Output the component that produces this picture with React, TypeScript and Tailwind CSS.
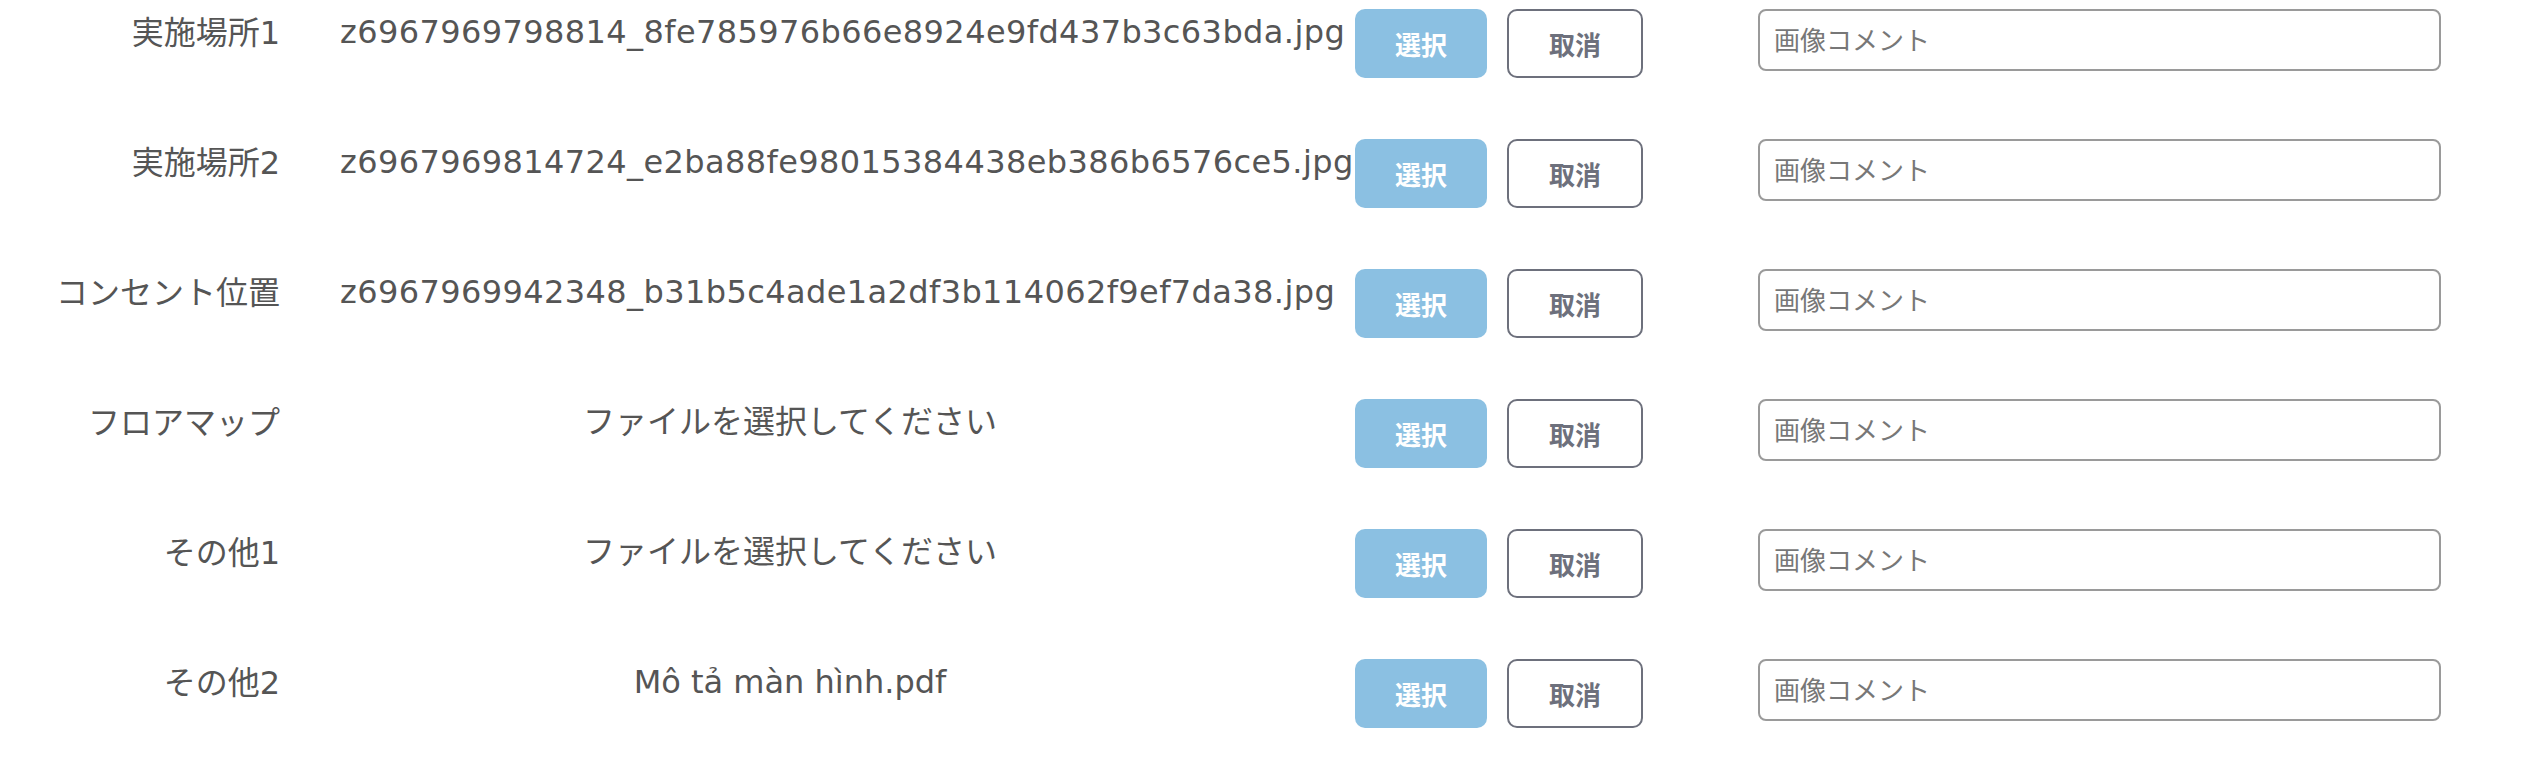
import React from 'react';

type Row = {
  label: string;
  file: string | null;
};

const rows: Row[] = [
  { label: '実施場所1', file: 'z6967969798814_8fe785976b66e8924e9fd437b3c63bda.jpg' },
  { label: '実施場所2', file: 'z6967969814724_e2ba88fe98015384438eb386b6576ce5.jpg' },
  { label: 'コンセント位置', file: 'z6967969942348_b31b5c4ade1a2df3b114062f9ef7da38.jpg' },
  { label: 'フロアマップ', file: null },
  { label: 'その他1', file: null },
  { label: 'その他2', file: 'Mô tả màn hình.pdf' },
];

const textFont = "font-['DejaVu_Sans','Noto_Sans_CJK_JP',sans-serif]";

function UploadRow({ row }: { row: Row }) {
  const tracking = row.file && row.file.length > 30 ? 'tracking-[0.4px]' : 'tracking-normal';

  return (
    <div className="flex items-start">
      {/* label */}
      <div className={`w-[280px] shrink-0 text-right text-[32px] leading-[48px] text-[#555555] ${textFont}`}>
        {row.label}
      </div>

      {/* file name */}
      <div
        className={`ml-[60px] w-[900px] shrink-0 text-center whitespace-nowrap text-[32px] leading-[46px] text-[#555555] ${tracking} ${textFont}`}
      >
        {row.file ?? 'ファイルを選択してください'}
      </div>

      {/* buttons */}
      <button className="ml-[115px] flex h-[69px] w-[132px] shrink-0 items-center justify-center rounded-[10px] bg-[#8bc0e2] text-[26px] font-bold text-white font-['Noto_Sans_CJK_JP',sans-serif]">
        選択
      </button>
      <button className="ml-[20px] flex h-[69px] w-[136px] shrink-0 items-center justify-center rounded-[10px] border-2 border-[#6d707c] bg-white text-[26px] font-bold text-[#6d707c] font-['Noto_Sans_CJK_JP',sans-serif]">
        取消
      </button>

      {/* comment */}
      <input
        type="text"
        placeholder="画像コメント"
        className="ml-[115px] h-[62px] w-[683px] shrink-0 rounded-[8px] border-2 border-[#9a9a9a] bg-white px-[14px] pb-[4px] text-[26px] text-[#555555] outline-none placeholder:text-[#777777] font-['Noto_Sans_CJK_JP',sans-serif]"
      />
    </div>
  );
}

export default function App() {
  return (
    <div className="min-h-screen bg-white pt-[9px]">
      <div className="flex flex-col gap-[61px]">
        {rows.map((row) => (
          <UploadRow key={row.label} row={row} />
        ))}
      </div>
    </div>
  );
}
